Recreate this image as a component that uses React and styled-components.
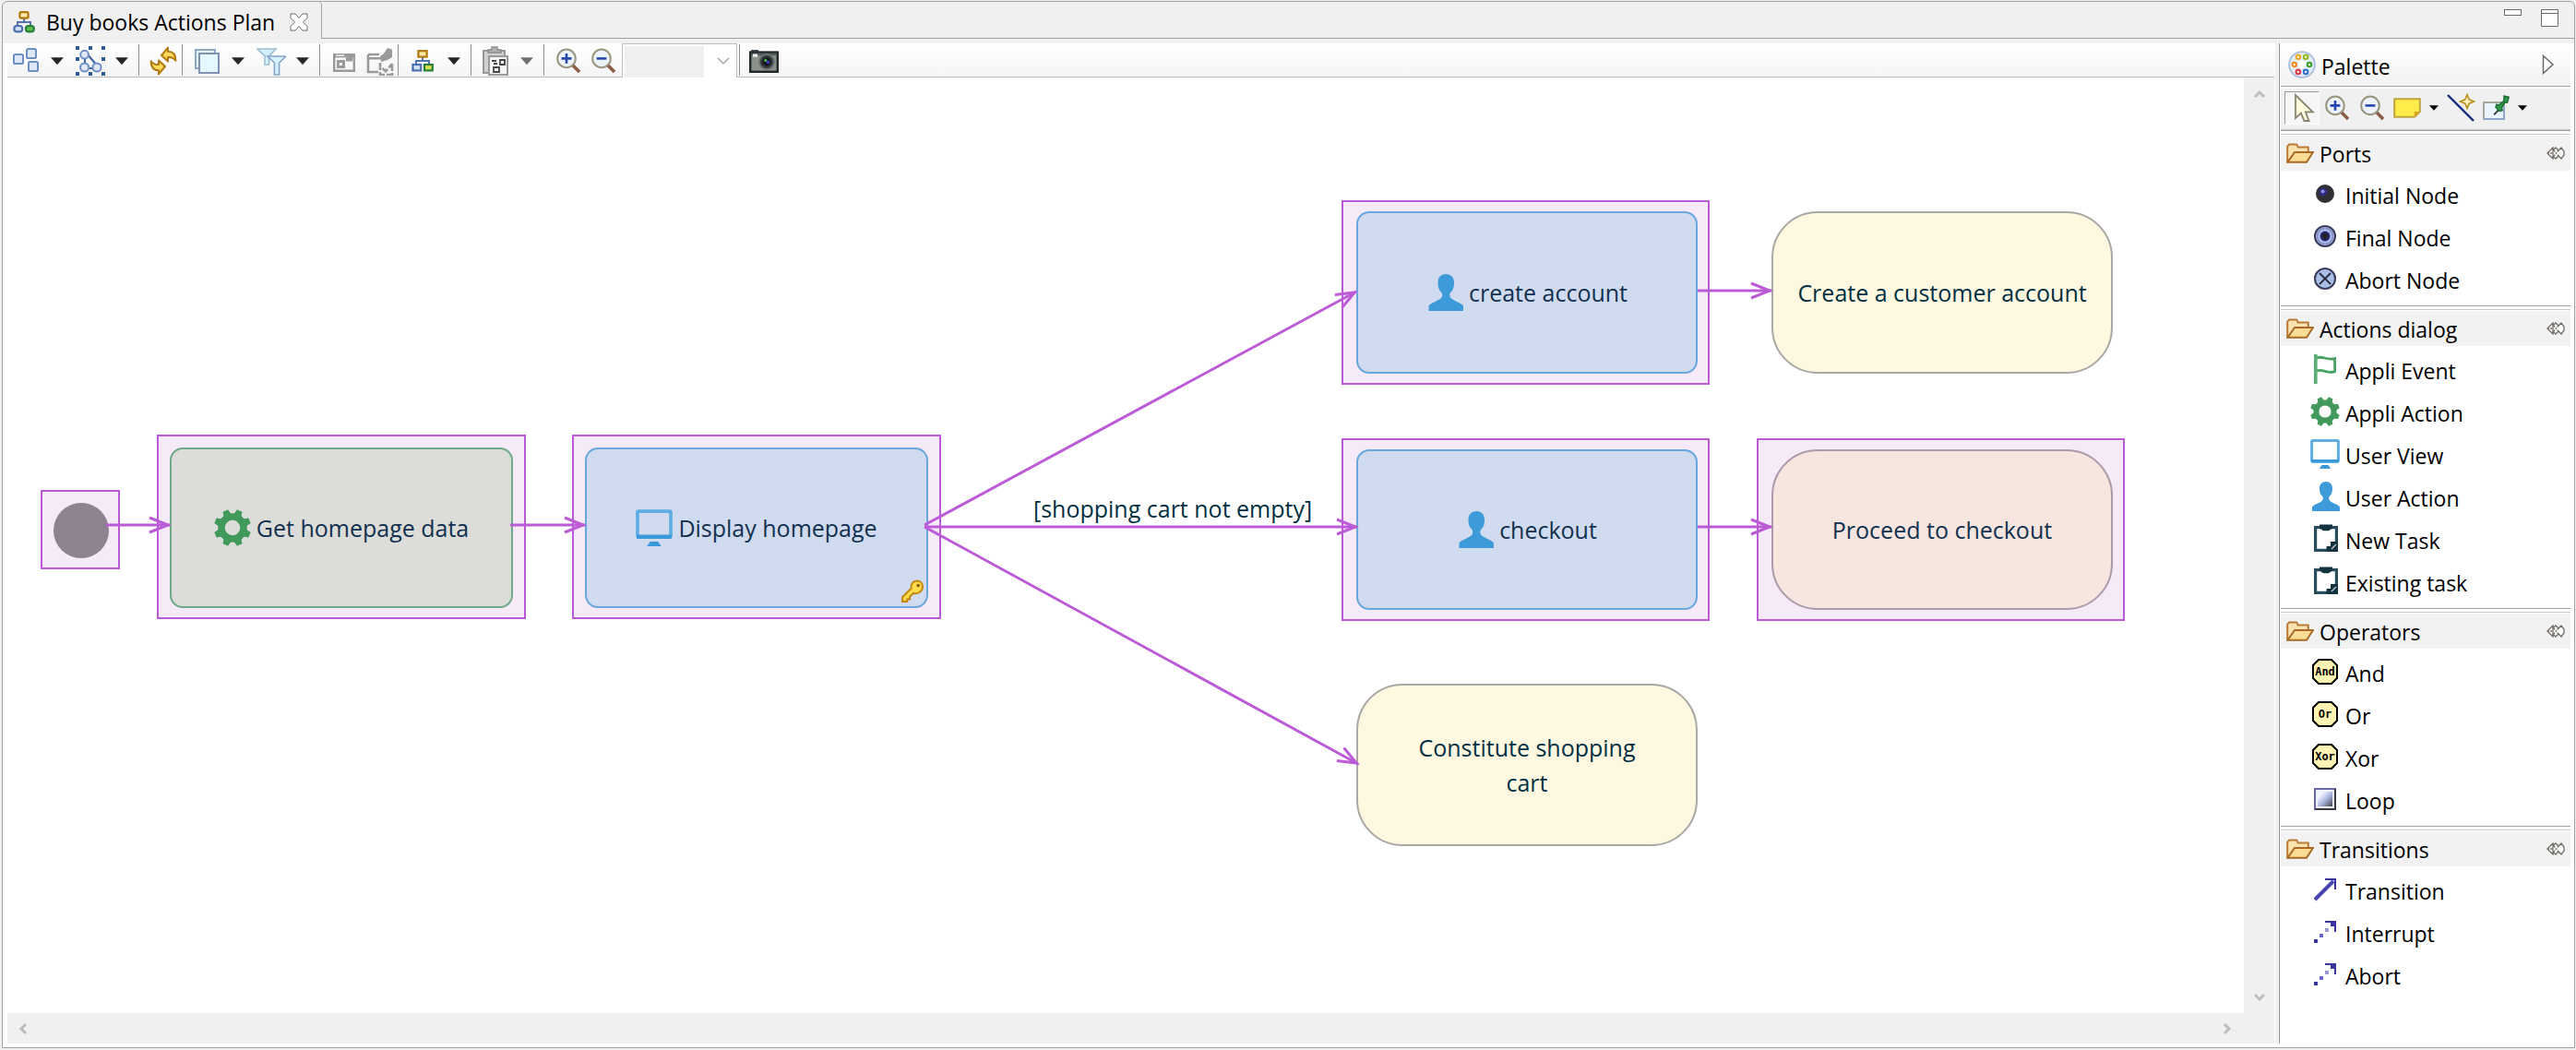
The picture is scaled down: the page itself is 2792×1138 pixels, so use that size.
import React, { useState } from "react";
import styled, { createGlobalStyle, css } from "styled-components";

const Global = createGlobalStyle`
  * { box-sizing: border-box; }
  body { margin: 0; background: #f0f0f0; }
  button, select { font: inherit; color: inherit; border: 0; padding: 0; background: none; border-radius: 0; }
`;

const uiFont = `"Segoe UI", "Open Sans", "Noto Sans", sans-serif`;

/* ---------- frame ---------- */

const Editor = styled.main`
  display: flex;
  flex-direction: column;
  min-height: 100vh;
  padding: 1px 1px 2px 2px;
  background: #f0f0f0;
  font-family: ${uiFont};
  font-size: 23px;
  line-height: 32px;
  color: #000;
`;

const Frame = styled.div`
  flex: 1;
  display: flex;
  flex-direction: column;
  border: 1px solid #a0a0a0;
  border-radius: 6px 6px 0 0;
`;

const TabStrip = styled.header`
  display: flex;
  height: 45px;
  align-items: flex-start;
`;

const Tab = styled.div`
  display: flex;
  align-items: center;
  height: 40px;
  padding: 4px 12px 0 11px;
  border-right: 1px solid #a0a0a0;
  border-top-right-radius: 4px;
  white-space: nowrap;
`;

const TabTitle = styled.h1`
  margin: 0 14px 0 12px;
  font-size: 23px;
  font-weight: 400;
  line-height: 32px;
`;

const TabRest = styled.div`
  flex: 1;
  display: flex;
  justify-content: flex-end;
  gap: 16px;
  height: 40px;
  padding: 6px 14px 0 0;
  border-bottom: 1px solid #a0a0a0;
`;

const PlainButton = styled.button`
  display: flex;
  align-items: center;
  justify-content: center;
  width: 24px;
  height: 24px;
`;

const Content = styled.div`
  flex: 1;
  display: flex;
  padding: 0 4px 4px 5px;
  background: #fff;
`;

const Left = styled.div`
  flex: 1;
  min-width: 0;
  display: flex;
  flex-direction: column;
`;

/* ---------- tool bar ---------- */

const Bar = styled.div`
  display: flex;
  align-items: center;
  gap: 2px;
  height: 37px;
  padding-left: 2px;
  background: linear-gradient(#fff, #f5f5f5);
  border-bottom: 1px solid #b8b8b8;
`;

const Group = styled.div`
  display: flex;
`;

const Tool = styled.button`
  display: flex;
  align-items: center;
  justify-content: center;
  width: 36px;
  height: 36px;
  padding-top: 2px;
`;

const Drop = styled(Tool)`
  width: 32px;
  color: ${(p) => (p.disabled ? "#707074" : "#262626")};
`;

const Divider = styled.span`
  width: 1px;
  height: 34px;
  margin-right: 6px;
  background: #909090;
`;

const Combo = styled.label`
  display: flex;
  align-items: center;
  width: 125px;
  height: 37px;
  padding: 2px 0 0 2px;
  background: #fff;
  border: 1px solid #c0c0c0;
  border-bottom: 0;
`;

const ComboSelect = styled.select`
  appearance: none;
  width: 86px;
  height: 34px;
  margin-right: 14px;
  background: #efefef;
`;

/* ---------- canvas ---------- */

const Middle = styled.div`
  flex: 1;
  display: flex;
`;

const Canvas = styled.section`
  position: relative;
  flex: 1;
  min-width: 0;
  overflow: hidden;
  background: #fff;
  font-size: 25px;
  line-height: 38px;
  color: #05304a;
`;

const placed = css`
  position: absolute;
  left: ${(p) => p.$x}px;
  top: ${(p) => p.$y}px;
  width: ${(p) => p.$w}px;
  height: ${(p) => p.$h}px;
`;

const Halo = styled.div`
  ${placed}
  background: #f6eaf8;
  border: 2px solid #bb5ad6;
`;

const kinds = {
  action: "background:#dcddd8; border:2px solid #70a98a; border-radius:14px; color:#12304f;",
  view: "background:#d1dbef; border:2px solid #68a7dd; border-radius:14px; color:#12304f;",
  task: "background:#fff8e1; border:2px solid #a9a8a4; border-radius:50px; color:#022f42;",
  taskOn: "background:#f7e6df; border:2px solid #ab9baa; border-radius:50px; color:#12304f;",
  start: "background:#8f8290; border-radius:50%;",
};

const Node = styled.div`
  ${placed}
  display: flex;
  align-items: center;
  justify-content: center;
  gap: 6px;
  padding: 0 ${(p) => (p.$narrow ? 48 : 8)}px;
  text-align: center;
  ${(p) => kinds[p.$kind]}
`;

const Badge = styled.span`
  position: absolute;
  right: 2px;
  bottom: 3px;
  display: flex;
`;

const EdgeLabel = styled.span`
  position: absolute;
  left: 1112px;
  top: 448px;
  white-space: nowrap;
  color: #022f42;
`;

const Edges = styled.svg`
  position: absolute;
  left: 0;
  top: 0;
  width: 100%;
  height: 100%;
  pointer-events: none;
`;

const VScroll = styled.div`
  display: flex;
  flex-direction: column;
  justify-content: space-between;
  align-items: center;
  width: 33px;
  padding: 6px 0 5px;
  background: #f0f0f0;
`;

const HScroll = styled.div`
  display: flex;
  justify-content: space-between;
  align-items: center;
  height: 33px;
  padding: 0 39px 0 5px;
  background: #f0f0f0;
`;

/* ---------- palette ---------- */

const PalettePanel = styled.aside`
  width: 320px;
  padding-left: 1px;
  margin-left: 1px;
  background: #fff;
  border-left: 3px solid #f0f0f0;
`;

const PaletteInner = styled.div`
  height: 100%;
  padding-left: 1px;
  border-left: 1px solid #8f8f8f;
`;

const PaletteHead = styled.div`
  display: flex;
  align-items: center;
  height: 47px;
  padding: 0 12px 0 8px;
  background: linear-gradient(#fff, #f2f2f2);
  border-bottom: 1px solid #a0a0a0;
`;

const PaletteTitle = styled.h2`
  flex: 1;
  margin: 0 0 0 6px;
  padding-top: 4px;
  font-size: 23px;
  font-weight: 400;
  line-height: 32px;
`;

const PaletteTools = styled.div`
  display: flex;
  align-items: center;
  height: 45px;
  margin-top: 2px;
  padding: 0 0 2px 4px;
  background: #f0f0f0;
  border-bottom: 1px solid #c8c8c8;
`;

const PTool = styled.button`
  display: flex;
  align-items: center;
  justify-content: center;
  width: 38px;
  height: 36px;
  ${(p) =>
    p.$on &&
    "background:#f6f6f6; border:1px solid #fff; border-top-color:#9a9a9a; border-left-color:#9a9a9a;"}
`;

const PDrop = styled(PTool)`
  width: 20px;
`;

const Drawer = styled.section`
  padding-bottom: 5px;
  border-top: 1px solid #a0a0a0;
`;

const DrawerHead = styled.button`
  display: flex;
  align-items: center;
  width: 100%;
  height: 40px;
  margin-top: 3px;
  padding: 0 6px;
  border-top: 1px solid #c8c8c8;
  background: linear-gradient(#fff 1px, #f2f2f2 1px);
  text-align: left;
`;

const DrawerTitle = styled.span`
  flex: 1;
  margin-left: 6px;
  padding-top: 2px;
`;

const Items = styled.ul`
  margin: 0;
  padding: 3px 0 0;
  list-style: none;
`;

const Item = styled.button`
  display: flex;
  align-items: center;
  gap: 6px;
  width: 100%;
  height: 46px;
  padding: 0 0 2px 32px;
  text-align: left;
`;

const ItemText = styled.span`
  padding-top: 4px;
`;

/* ---------- icons ---------- */

const Pic = ({ s = 32, h, children, box = "0 0 16 16", crisp }) => (
  <svg width={s} height={h || s} viewBox={box} fill="none" aria-hidden="true" shapeRendering={crisp ? "crispEdges" : undefined}>
    {children}
  </svg>
);

const DownTri = ({ s = 14 }) => (
  <svg width={s} height={s * 0.6} viewBox="0 0 14 8" aria-hidden="true">
    <path d="M0 0h14L7 8z" fill="currentColor" />
  </svg>
);

const TreeIcon = ({ round }) => (
  <Pic s={24} box="0 0 12 12">
    <path d="M6 4v2M2.5 8V6h7v2" stroke="#5273b0" />
    <rect x="3.7" y=".6" width="4.6" height="3.2" rx={round ? 0.9 : 0} fill="#ffe9a8" stroke="#b1770c" strokeWidth="1.1" />
    <rect x=".7" y="8" width="4.4" height="3.2" rx={round ? 1.5 : 0} fill="#cfe0f5" stroke="#4d6fb0" strokeWidth="1.1" />
    <rect x="7" y="8" width="4.4" height="3.2" rx={round ? 1.5 : 0} fill={round ? "#5fbb4b" : "#d9e04a"} stroke="#26803c" strokeWidth="1.1" />
  </Pic>
);

const CloseIcon = () => (
  <Pic s={20} box="0 0 20 20">
    <path d="M1 1h5l4 4.500L14 1h5v4.500L14.500 10 19 14.500V19h-5l-4-4.500L6 19H1v-4.500L5.500 10 1 5.500z" fill="#fff" stroke="#6a6a6a" />
  </Pic>
);

const blueBox = { fill: "#dfe9f5", stroke: "#6d8fc4", strokeWidth: 1 };

const ArrangeIcon = () => (
  <Pic>
    <rect x="1.500" y="4.500" width="5" height="5" rx=".8" {...blueBox} />
    <rect x="8.500" y="1.500" width="5" height="5" rx=".8" {...blueBox} />
    <rect x="9.500" y="8.500" width="5" height="5" rx=".8" {...blueBox} />
  </Pic>
);

const SelectAllIcon = () => (
  <Pic>
    <path d="M5 4v8h7M6 4l6 7" stroke="#3c62a0" />
    <circle cx="4.800" cy="4.600" r="2.200" {...blueBox} />
    <circle cx="4.800" cy="11.500" r="2.300" {...blueBox} />
    <circle cx="11.500" cy="11.500" r="2.300" {...blueBox} />
    <path fill="#2f5a94" d="M0 0h2v2H0zM7 0h2v2H7zM14 0h2v2h-2zM0 6h2v2H0zM14 6h2v2h-2zM0 14h2v2H0zM7 14h2v2H7zM14 14h2v2h-2z" />
  </Pic>
);

const RefreshIcon = () => (
  <Pic>
    <path d="M7 5 10.500.8v2.100c2.700 0 4.200 1.800 4.200 5-1-1.500-2.200-2-4.200-1.900v2.300z" fill="#ffd95c" stroke="#b1790e" strokeLinejoin="round" />
    <path d="M9 11 5.500 15.200v-2.100C2.800 13.100 1.300 11.300 1.300 8.100c1 1.500 2.200 2 4.200 1.900V7.700z" fill="#ffd95c" stroke="#b1790e" strokeLinejoin="round" />
  </Pic>
);

const LayersIcon = () => (
  <Pic>
    <rect x="2" y="2" width="10.500" height="10" fill="#e4f4fb" stroke="#8fa9c4" />
    <rect x="4" y="4" width="10.500" height="10.500" fill="#e6f8ff" stroke="#8092b4" />
  </Pic>
);

const FilterIcon = () => (
  <Pic>
    <path d="M.5 1.500h10L6.800 5.300V10H4.500V5.300z" fill="#d3f1ff" stroke="#9dbdd4" strokeWidth=".8" />
    <path d="M6 5.500h10L12.300 9v6.500H9.700V9z" fill="#d3f1ff" stroke="#87a4c4" strokeWidth=".8" />
  </Pic>
);

const HideIcon = () => (
  <Pic s={28} box="0 0 14 14">
    <path d="M1.600 3.600h10.800v8.800H1.600z" stroke="#9a9a9a" strokeWidth="1.200" />
    <path d="M1 3h12v2.200H1z" fill="#9a9a9a" />
    <path d="M3 6.500h4.500V11H3zM8 5h3.500v2.200H8z" fill="#9a9a9a" />
    <path d="M4.400 8h1.500v1.500H4.400zM2.500 3.700H7v.7H2.500z" fill="#fff" />
  </Pic>
);

const PinHideIcon = () => (
  <Pic>
    <path d="M2 6.600h7M2 4.500V14h5.500M2 4.500h6" stroke="#9a9a9a" strokeWidth="1.300" />
    <path d="M12.500 1 15 1.800V6l-2.500 1.500L9 8.500 8.500 5.500 10.500 4z" fill="#9a9a9a" />
    <path d="M8.500 9v6.500h6.500V9M9.800 12l1.700 1.700L15 9.500" stroke="#9a9a9a" strokeWidth="1.300" strokeDasharray="4 1" />
  </Pic>
);

const PasteIcon = () => (
  <Pic>
    <rect x="1.500" y="2.500" width="11.500" height="12" fill="#d0d0d0" stroke="#979797" />
    <path d="M4 3.500V2h2V.5h3V2h2v1.500z" fill="#b5b5b5" stroke="#8b8b8b" strokeWidth=".7" />
    <rect x="4.500" y="5.500" width="10" height="10" fill="#f4f4f4" stroke="#9a9a9a" />
    <path d="M6 8h2.500M10.500 7.500h2.500v2.500h-2.500zM7 11.500h3v2.500H7zM7 9.500h2" stroke="#444" strokeWidth=".9" />
  </Pic>
);

const LensIcon = ({ minus }) => (
  <Pic s={28} box="0 0 14 14">
    <path d="m9.300 9.300 3.700 3.700" stroke="#8a5b44" strokeWidth="1.800" />
    <circle cx="6" cy="5.700" r="4.900" fill="#edf3fb" stroke="#9b957f" strokeWidth="1" />
    <path d={minus ? "M3.300 5.700h5.400" : "M3.300 5.700h5.400M6 3v5.400"} stroke="#2746ad" strokeWidth="1.300" />
  </Pic>
);

const CameraIcon = () => (
  <Pic h={26} box="0 0 16 13">
    <path d="M1 .5h4V2H1z" fill="#4a5359" />
    <rect x=".6" y="1.800" width="14.800" height="10.600" fill="#8b918c" stroke="#20282c" strokeWidth="1.200" />
    <rect x="1.200" y="2.400" width="13.600" height="1.200" fill="#545b58" />
    <rect x="2" y="2.800" width="2.500" height="1.500" fill="#fff" />
    <circle cx="9.500" cy="7" r="4" fill="#31383b" stroke="#6d746f" />
    <circle cx="9.500" cy="7" r="2.200" fill="#10161c" />
    <circle cx="8.900" cy="6.200" r=".8" fill="#49b04c" />
    <circle cx="10.200" cy="7.200" r=".8" fill="#3b3bd6" />
  </Pic>
);

const PaletteIcon = () => (
  <Pic s={30}>
    <circle cx="8" cy="8" r="7.400" fill="#e6eef9" stroke="#a9bedd" />
    <circle cx="8" cy="8" r="2.200" fill="#fff" />
    {[
      [5.800, 3.600, "#f0a81c"],
      [10.200, 3.600, "#8fb51c"],
      [3.600, 8, "#f08a1c"],
      [12.300, 8, "#3aa02c"],
      [5.800, 12.200, "#d83a4a"],
      [10.200, 12.200, "#2f6fd6"],
    ].map(([x, y, c]) => (
      <circle key={c} cx={x} cy={y} r="1.200" fill="#fff6d8" stroke={c} strokeWidth="1.100" />
    ))}
  </Pic>
);

const CursorIcon = () => (
  <Pic>
    <path d="M4.500 1v12.500l3-2.700 1.700 4.200h2.600l-1.900-4.800h4z" fill="#fffde0" stroke="#8a8370" strokeWidth=".9" />
  </Pic>
);

const NoteIcon = () => (
  <Pic s={30} h={22} box="0 0 15 11">
    <path d="M.6.6h13.800v7L11.500 10.400H.6z" fill="#ffec4a" stroke="#bfa53a" />
    <path d="M14.400 7.500h-3v3z" fill="#d9a520" />
  </Pic>
);

const ConnectIcon = () => (
  <Pic>
    <path d="m1 1 14 14" stroke="#0e2b7e" strokeWidth="1.200" />
    <path d="M11.500.8 12.600 3.400 15.200 4.500 12.600 5.600 11.500 8.200 10.400 5.600 7.800 4.500 10.400 3.400z" fill="#fff3c0" stroke="#b98e1c" strokeWidth=".8" />
  </Pic>
);

const PinIcon = () => (
  <Pic s={30} box="0 0 15 15">
    <rect x="1" y="4.500" width="11" height="9" fill="#e8f5ff" stroke="#a3aa9c" />
    <path d="M1 13.500h11v-7" stroke="#8fa5cc" />
    <path d="M6.600 11.200 9 8.600" stroke="#333" strokeWidth=".9" />
    <path d="m12 1 2.600.6-.8 2.900-1.500.2-1.500 2.600.3 1.600-1.600.3-2-2 .4-1.500 1.500.2 2.500-2.300z" fill="#2f9a4a" stroke="#1d6a34" strokeWidth=".7" />
  </Pic>
);

const FolderIcon = () => (
  <Pic s={30} h={22} box="0 0 15 11">
    <path d="M.6 10.300V1.800L1.600.7h4l.8 1.600h5.500V5" fill="#fbe3b0" stroke="#bb7a36" />
    <path d="M.7 10.400 4.500 5h10L11 10.400z" fill="#fbdc94" stroke="#a86a24" />
  </Pic>
);

const PushpinIcon = () => (
  <Pic s={20} h={14} box="0 0 20 14">
    <g stroke="#6f6b62" strokeWidth="1.300">
      <path d="M1 7 7 1v12zM7 4l3-3 3 3 3-3 3 4v4l-3 4-3-3-3 3-3-3" fill="#fff" />
      <path d="M1 7h6M8 4l5 6M13 4l-5 6" strokeDasharray="2 1" />
    </g>
  </Pic>
);

const GearIcon = ({ s }) => (
  <Pic s={s} box="-8 -8 16 16">
    <circle r="4.800" stroke="#419a5c" strokeWidth="3" />
    {[22.5, 67.5, 112.5, 157.5, 202.5, 247.5, 292.5, 337.5].map((a) => (
      <path key={a} d="M-1.200-8h2.400l.7 3h-3.800z" fill="#419a5c" transform={`rotate(${a})`} />
    ))}
  </Pic>
);

const ScreenIcon = ({ s }) => (
  <Pic s={s}>
    <rect x=".8" y=".8" width="14.400" height="11.200" rx=".6" stroke="#5fade3" strokeWidth="1.500" />
    <path d="M.5 11h15v1.800H.5z" fill="#3a9ad9" />
    <path d="M6.300 14h3.400l1.400 2H4.900z" fill="#3a9ad9" />
  </Pic>
);

const PersonIcon = ({ s }) => (
  <Pic s={s}>
    <path d="M8.500 0C6.400 0 5 1.500 5 3.600c0 1.900.4 3.500 1.500 4.300.5.500.6 1.600 0 2.400C5.500 11.600 1 12.700 1 14v2h15v-2c0-1.300-4.500-2.400-5.500-3.700-.6-.8-.5-1.900 0-2.400C11.600 7.100 12 5.500 12 3.600 12 1.500 10.600 0 8.500 0z" fill="#3d9bd9" />
  </Pic>
);

const FlagIcon = () => (
  <Pic>
    <path d="M2.900 0v16" stroke="#5aad74" strokeWidth="1.800" />
    <path d="M3.500 2c3-1.500 5 1.500 9.800.3v7C9 11 7 7.500 3.500 9" stroke="#4aa366" strokeWidth="1.400" />
  </Pic>
);

const TaskIcon = () => (
  <Pic>
    <path d="M9.500 14.200H2.800V1.800h11.400V10" stroke="#2a4d5c" strokeWidth="1.600" />
    <path d="M5 .2h7v1.900L10 3.600H7L5 2.100z" fill="#12333f" />
    <path d="M11 9.500h4V15H8.800v-3H11z" fill="#12333f" />
    <path d="M11.500 13.500 14 11" stroke="#b9c6cc" strokeWidth=".7" />
  </Pic>
);

const OrbIcon = ({ kind }) => (
  <Pic>
    {kind === "initial" && (
      <>
        <circle cx="8" cy="8" r="5" fill="#302f36" />
        <circle cx="7" cy="7" r="2" fill="#2c2b90" />
        <circle cx="6.800" cy="6.800" r="1" fill="#8f8fd8" />
      </>
    )}
    {kind !== "initial" && <circle cx="8" cy="8" r="5.500" fill="#a9bfe8" stroke="#3b3a58" />}
    {kind === "final" && (
      <>
        <circle cx="8" cy="8" r="4.300" stroke="#8e93d0" />
        <circle cx="8" cy="8" r="2.700" fill="#26246e" />
        <circle cx="8" cy="8" r="1.600" fill="#24232c" />
      </>
    )}
    {kind === "abort" && <path d="m5 5 6 6M11 5l-6 6" stroke="#2d2c3c" strokeWidth=".9" />}
  </Pic>
);

const OperatorIcon = ({ word }) => (
  <Pic>
    <path d="M4.500 1.500h7l3 3v7l-3 3h-7l-3-3v-7z" fill="#fff3b4" stroke="#000" />
    <text x="8" y="10" textAnchor="middle" fontFamily="DejaVu Sans Mono, monospace" fontWeight="700" fontSize="6" fill="#000">
      {word}
    </text>
  </Pic>
);

const LoopIcon = () => (
  <Pic>
    <defs>
      <linearGradient id="loopShade" x1="0" y1="0" x2="1" y2="1">
        <stop offset=".2" stopColor="#f4f6ff" />
        <stop offset=".55" stopColor="#a9b4e0" />
        <stop offset="1" stopColor="#444" />
      </linearGradient>
    </defs>
    <rect x="2.500" y="2.500" width="11" height="11" fill="#f0f2fa" stroke="#6a68a4" />
    <path d="M13.500 2.500v11h-11" stroke="#3a3944" />
    <rect x="4" y="4" width="8" height="8" fill="url(#loopShade)" />
  </Pic>
);

const TransitionIcon = ({ dashed }) => (
  <Pic crisp={dashed}>
    {dashed ? (
      <>
        <path d="M2 12h2v2H2z" fill="#38349a" />
        <path d="M5 9h2v2H5z" fill="#6a66cc" />
        <path d="M8 6h2v2H8z" fill="#9a98cc" />
        <path d="M8 2h6v6h-1V5h-2V3H8z" fill="#38349a" />
      </>
    ) : (
      <>
        <path d="M2.500 13.500 12.500 3.500" stroke="#4a46b0" strokeWidth="2" />
        <path d="M8 2.500h5.500V8" stroke="#38349a" />
      </>
    )}
  </Pic>
);

const KeyIcon = () => (
  <Pic s={26} box="0 0 13 13">
    <path d="M9 .8c-2.200 0-3.600 1.800-3.200 4L1 9.700v2.300h2.600V10.700h1.500V9.200L7 7.500c2.600.5 5-1 5-3.600C12 2.100 10.800.8 9 .8z" fill="#ffdc4c" stroke="#c2850f" />
    <circle cx="9.600" cy="3.300" r=".9" fill="#8a5a08" />
  </Pic>
);

const ChevronIcon = ({ dir }) => {
  const turn = { up: 0, right: 90, down: 180, left: 270 }[dir];
  return (
    <Pic s={24} box="0 0 24 24">
      <path d="m7 15 5-5 5 5" stroke="#bdbdbd" strokeWidth="3" transform={`rotate(${turn} 12 12)`} />
    </Pic>
  );
};

/* ---------- data ---------- */

const toolbar = [
  { name: "Arrange", icon: <ArrangeIcon />, drop: true },
  { name: "Select", icon: <SelectAllIcon />, drop: true },
  "|",
  { name: "Refresh", icon: <RefreshIcon /> },
  "|",
  { name: "Layers", icon: <LayersIcon />, drop: true },
  { name: "Filters", icon: <FilterIcon />, drop: true },
  "|",
  { name: "Hide element", icon: <HideIcon />, disabled: true },
  { name: "Pin element", icon: <PinHideIcon />, disabled: true },
  "|",
  { name: "Layout", icon: <TreeIcon />, drop: true },
  "|",
  { name: "Paste format", icon: <PasteIcon />, drop: true, disabled: true },
  "|",
  { name: "Zoom in", icon: <LensIcon /> },
  { name: "Zoom out", icon: <LensIcon minus /> },
];

const drawers = [
  {
    title: "Ports",
    items: [
      ["Initial Node", <OrbIcon kind="initial" />],
      ["Final Node", <OrbIcon kind="final" />],
      ["Abort Node", <OrbIcon kind="abort" />],
    ],
  },
  {
    title: "Actions dialog",
    items: [
      ["Appli Event", <FlagIcon />],
      ["Appli Action", <GearIcon s={32} />],
      ["User View", <ScreenIcon s={32} />],
      ["User Action", <PersonIcon s={32} />],
      ["New Task", <TaskIcon />],
      ["Existing task", <TaskIcon />],
    ],
  },
  {
    title: "Operators",
    items: [
      ["And", <OperatorIcon word="And" />],
      ["Or", <OperatorIcon word="Or" />],
      ["Xor", <OperatorIcon word="Xor" />],
      ["Loop", <LoopIcon />],
    ],
  },
  {
    title: "Transitions",
    items: [
      ["Transition", <TransitionIcon />],
      ["Interrupt", <TransitionIcon dashed />],
      ["Abort", <TransitionIcon dashed />],
    ],
  },
];

const halos = [
  [36, 447, 86, 86],
  [162, 387, 400, 200],
  [612, 387, 400, 200],
  [1446, 133, 399, 200],
  [1446, 391, 399, 198],
  [1896, 391, 399, 198],
];

const nodes = [
  { box: [176, 401, 372, 174], kind: "action", icon: <GearIcon s={40} />, text: "Get homepage data" },
  { box: [626, 401, 372, 174], kind: "view", icon: <ScreenIcon s={40} />, text: "Display homepage", key: true },
  { box: [1462, 145, 370, 176], kind: "view", icon: <PersonIcon s={40} />, text: "create account" },
  { box: [1912, 145, 370, 176], kind: "task", text: "Create a customer account" },
  { box: [1462, 403, 370, 174], kind: "view", icon: <PersonIcon s={40} />, text: "checkout" },
  { box: [1912, 403, 370, 174], kind: "taskOn", text: "Proceed to checkout" },
  { box: [1462, 657, 370, 176], kind: "task", text: "Constitute shopping cart", narrow: true },
  { box: [50, 461, 60, 60], kind: "start" },
];

const edges = [
  "M107 485H176",
  "M545 485H626",
  "M994 485 1462 232",
  "M994 487H1463",
  "M994 487 1464 744",
  "M1832 231H1912",
  "M1832 487H1912",
];

/* ---------- parts ---------- */

function Toolbar() {
  return (
    <Bar role="toolbar" aria-label="Diagram tools">
      {toolbar.map((t, i) =>
        t === "|" ? (
          <Divider key={i} />
        ) : (
          <Group key={i}>
            <Tool aria-label={t.name} disabled={t.disabled}>{t.icon}</Tool>
            {t.drop && (
              <Drop aria-label={`${t.name} menu`} disabled={t.disabled}>
                <DownTri />
              </Drop>
            )}
          </Group>
        )
      )}
      <Combo>
        <ComboSelect aria-label="Zoom level" defaultValue="">
          <option value=""></option>
        </ComboSelect>
        <svg width="14" height="9" viewBox="0 0 14 9" fill="none" aria-hidden="true">
          <path d="m1 1 6 6 6-6" stroke="#a8a8a8" strokeWidth="1.500" />
        </svg>
      </Combo>
      <Divider />
      <Tool aria-label="Export as image"><CameraIcon /></Tool>
    </Bar>
  );
}

function Diagram() {
  return (
    <Canvas aria-label="Diagram">
      {halos.map(([x, y, w, h]) => (
        <Halo key={`${x}-${y}`} $x={x} $y={y} $w={w} $h={h} />
      ))}
      {nodes.map(({ box: [x, y, w, h], kind, icon, text, narrow, key }) =>
        text ? (
          <Node key={`${x}-${y}`} $x={x} $y={y} $w={w} $h={h} $kind={kind} $narrow={narrow}>
            {icon}
            <span>{text}</span>
            {key && <Badge><KeyIcon /></Badge>}
          </Node>
        ) : (
          <Node key={`${x}-${y}`} $x={x} $y={y} $w={w} $h={h} $kind={kind} />
        )
      )}
      <Edges fill="none" stroke="#bb5bd6" strokeWidth="3">
        <defs>
          <marker id="open" markerUnits="userSpaceOnUse" markerWidth="28" markerHeight="22" refX="24" refY="11" orient="auto">
            <path d="M2 3 22 11 2 19" fill="none" stroke="#bb5bd6" strokeWidth="3" />
          </marker>
        </defs>
        {edges.map((d) => (
          <path key={d} d={d} markerEnd="url(#open)" />
        ))}
      </Edges>
      <EdgeLabel>[shopping cart not empty]</EdgeLabel>
    </Canvas>
  );
}

function PaletteDrawer({ title, items }) {
  const [open, setOpen] = useState(true);
  return (
    <Drawer>
      <DrawerHead aria-expanded={open} onClick={() => setOpen(!open)}>
        <FolderIcon />
        <DrawerTitle>{title}</DrawerTitle>
        <PushpinIcon />
      </DrawerHead>
      {open && (
        <Items>
          {items.map(([label, icon]) => (
            <li key={label}>
              <Item>
                {icon}
                <ItemText>{label}</ItemText>
              </Item>
            </li>
          ))}
        </Items>
      )}
    </Drawer>
  );
}

function Palette() {
  return (
    <PalettePanel>
      <PaletteInner>
        <PaletteHead>
          <PaletteIcon />
          <PaletteTitle>Palette</PaletteTitle>
          <PlainButton aria-label="Hide palette">
            <svg width="14" height="22" viewBox="0 0 14 22" fill="none" aria-hidden="true">
              <path d="M1.500 1.500v19L12 11z" fill="#fff" stroke="#6a6a6a" strokeWidth="1.500" />
            </svg>
          </PlainButton>
        </PaletteHead>
        <PaletteTools role="toolbar" aria-label="Palette tools">
          <PTool $on aria-label="Select"><CursorIcon /></PTool>
          <PTool aria-label="Zoom in"><LensIcon /></PTool>
          <PTool aria-label="Zoom out"><LensIcon minus /></PTool>
          <PTool aria-label="Note"><NoteIcon /></PTool>
          <PDrop aria-label="Note menu"><DownTri s={10} /></PDrop>
          <PTool aria-label="Generic connection"><ConnectIcon /></PTool>
          <PTool aria-label="Pin elements"><PinIcon /></PTool>
          <PDrop aria-label="Pin menu"><DownTri s={10} /></PDrop>
        </PaletteTools>
        {drawers.map((d) => (
          <PaletteDrawer key={d.title} {...d} />
        ))}
      </PaletteInner>
    </PalettePanel>
  );
}

export default function App() {
  return (
    <Editor>
      <Global />
      <Frame>
        <TabStrip>
          <Tab>
            <TreeIcon round />
            <TabTitle>Buy books Actions Plan</TabTitle>
            <PlainButton aria-label="Close"><CloseIcon /></PlainButton>
          </Tab>
          <TabRest>
            <PlainButton aria-label="Minimize">
              <svg width="20" height="20" viewBox="0 0 20 20" aria-hidden="true">
                <rect x=".5" y=".5" width="18" height="6" fill="#fff" stroke="#6a6a6a" />
              </svg>
            </PlainButton>
            <PlainButton aria-label="Maximize">
              <svg width="20" height="20" viewBox="0 0 20 20" aria-hidden="true">
                <path d="M.5.5h18v18H.5zM.5 4.500h18" fill="#fff" stroke="#6a6a6a" />
              </svg>
            </PlainButton>
          </TabRest>
        </TabStrip>
        <Content>
          <Left>
            <Toolbar />
            <Middle>
              <Diagram />
              <VScroll>
                <ChevronIcon dir="up" />
                <ChevronIcon dir="down" />
              </VScroll>
            </Middle>
            <HScroll>
              <ChevronIcon dir="left" />
              <ChevronIcon dir="right" />
            </HScroll>
          </Left>
          <Palette />
        </Content>
      </Frame>
    </Editor>
  );
}
